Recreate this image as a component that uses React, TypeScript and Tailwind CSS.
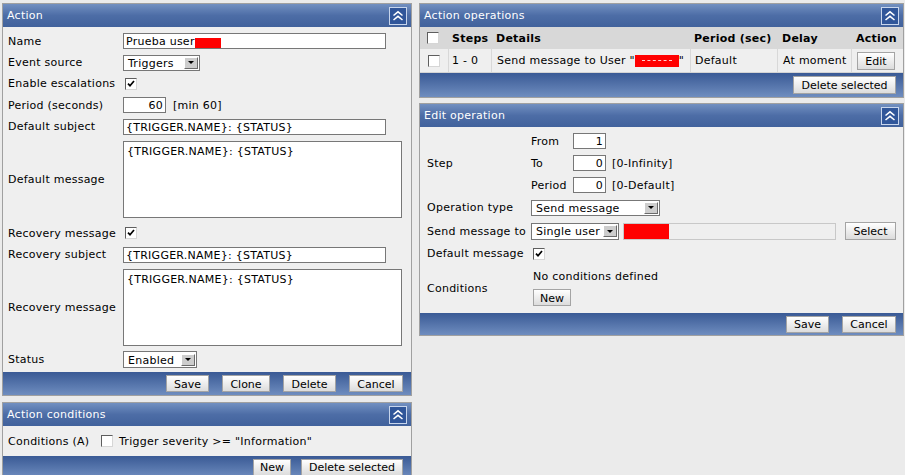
import React from 'react';

function CollapseIcon() {
  return (
    <svg width="18" height="18" viewBox="0 0 18 18" className="block shrink-0">
      <rect x="0.5" y="0.5" width="17" height="17" fill="#30569a" stroke="#c7d5ec" />
      <path d="M4.5 8.5 L9 4.8 L13.5 8.5 M4.5 13 L9 9.3 L13.5 13" fill="none" stroke="#ffffff" strokeWidth="1.5" />
    </svg>
  );
}

function PanelHeader({ title }: { title: string }) {
  return (
    <div className="h-[23px] flex items-center justify-between pl-[4px] pr-[4px] text-white bg-linear-to-b from-[#7290c1] via-[#4d6da6] to-[#41629c]">
      <span className="pt-[2px]">{title}</span>
      <CollapseIcon />
    </div>
  );
}

function PanelFooter({ children, className }: { children: React.ReactNode; className: string }) {
  return (
    <div className={`flex items-center justify-end bg-linear-to-b from-[#3a5a95] to-[#6f8dbf] ${className}`}>
      {children}
    </div>
  );
}

function Btn({ children, className }: { children: React.ReactNode; className: string }) {
  return (
    <button className={`flex items-center justify-center pt-[1px] border border-[#a4a4a4] bg-linear-to-b from-white to-[#dcdcdc] text-[11px] leading-none tracking-normal text-black ${className}`}>
      {children}
    </button>
  );
}

function Check({ checked }: { checked?: boolean }) {
  return (
    <span className="w-[12px] h-[12px] shrink-0 flex items-center justify-center bg-white border border-t-[#5e5e5e] border-l-[#5e5e5e] border-b-[#d6d6d6] border-r-[#d6d6d6]">
      {checked && (
        <svg width="8" height="8" viewBox="0 0 8 8">
          <path d="M1 3.6 L3 5.8 L7 1" stroke="#000" strokeWidth="1.7" fill="none" />
        </svg>
      )}
    </span>
  );
}

function Select({ value, className }: { value: string; className: string }) {
  return (
    <div className={`flex items-center bg-white border border-[#777] pl-[4px] ${className}`}>
      <span className="leading-none pt-[1px]">{value}</span>
      <span className="ml-auto mr-[1px] w-[14px] h-[12px] flex items-center justify-center bg-[#cdcdcd] border border-t-white border-l-white border-b-[#6a6a6a] border-r-[#6a6a6a]">
        <span className="w-0 h-0 border-x-[3px] border-x-transparent border-t-[3px] border-t-black" />
      </span>
    </div>
  );
}

function Field({ children, className }: { children?: React.ReactNode; className: string }) {
  return (
    <div className={`flex items-center bg-white border border-[#777] px-[2px] pt-[1px] leading-none ${className}`}>
      {children}
    </div>
  );
}

function Row({ label, h, children }: { label: string; h: string; children: React.ReactNode }) {
  return (
    <div className={`flex items-center ${h}`}>
      <div className="w-[115px] shrink-0 pt-[2px]">{label}</div>
      {children}
    </div>
  );
}

const MSG = '{TRIGGER.NAME}: {STATUS}';

function ActionPanel() {
  return (
    <div className="border border-[#a0a0a0]">
      <PanelHeader title="Action" />
      <div className="bg-[#efefef] pt-[3px] pb-[2px] pl-[5px]">
        <Row label="Name" h="h-[22px]">
          <Field className="w-[263px] h-[16px]">
            <span>Prueba user</span>
            <span className="inline-block w-[26px] h-[10px] mt-[3px] bg-[#ff0000]" />
          </Field>
        </Row>
        <Row label="Event source" h="h-[21px]">
          <Select value="Triggers" className="w-[77px] h-[16px]" />
        </Row>
        <Row label="Enable escalations" h="h-[21px]">
          <span className="ml-[2px]"><Check checked /></span>
        </Row>
        <Row label="Period (seconds)" h="h-[22px]">
          <Field className="w-[43px] h-[16px] justify-end">60</Field>
          <span className="ml-[7px] pt-[2px]">[min 60]</span>
        </Row>
        <Row label="Default subject" h="h-[21px]">
          <Field className="w-[263px] h-[16px]">{MSG}</Field>
        </Row>
        <Row label="Default message" h="h-[85px]">
          <textarea
            readOnly
            defaultValue={MSG}
            className="w-[279px] h-[77px] resize-none bg-white border border-[#777] px-[3px] pt-[3px] leading-[13px] outline-none"
          />
        </Row>
        <Row label="Recovery message" h="h-[22px]">
          <span className="ml-[2px]"><Check checked /></span>
        </Row>
        <Row label="Recovery subject" h="h-[21px]">
          <Field className="w-[263px] h-[16px]">{MSG}</Field>
        </Row>
        <Row label="Recovery message" h="h-[84px]">
          <textarea
            readOnly
            defaultValue={MSG}
            className="w-[279px] h-[77px] resize-none bg-white border border-[#777] px-[3px] pt-[3px] leading-[13px] outline-none"
          />
        </Row>
        <Row label="Status" h="h-[21px]">
          <Select value="Enabled" className="w-[74px] h-[17px]" />
        </Row>
      </div>
      <PanelFooter className="h-[23px] gap-[13px] pr-[8px]">
        <Btn className="w-[43px] h-[17px]">Save</Btn>
        <Btn className="w-[48px] h-[17px]">Clone</Btn>
        <Btn className="w-[53px] h-[17px]">Delete</Btn>
        <Btn className="w-[54px] h-[17px]">Cancel</Btn>
      </PanelFooter>
    </div>
  );
}

function ConditionsPanel() {
  return (
    <div className="border border-[#a0a0a0] mt-[6px]">
      <PanelHeader title="Action conditions" />
      <div className="bg-[#efefef] h-[30px] flex items-center pl-[5px]">
        <span className="w-[93px] shrink-0 pt-[2px]">Conditions (A)</span>
        <Check />
        <span className="ml-[6px] pt-[2px]">Trigger severity &gt;= &quot;Information&quot;</span>
      </div>
      <PanelFooter className="h-[22px] gap-[10px] pr-[8px]">
        <Btn className="w-[38px] h-[17px]">New</Btn>
        <Btn className="w-[102px] h-[17px]">Delete selected</Btn>
      </PanelFooter>
    </div>
  );
}

function OperationsPanel() {
  return (
    <div className="border border-[#a0a0a0]">
      <PanelHeader title="Action operations" />
      <div className="flex h-[22px] bg-[#d8d8d8] font-bold items-center">
        <div className="w-[29px] pl-[7px] flex items-center"><Check /></div>
        <div className="w-[43px] pl-[3px] pt-[2px]">Steps</div>
        <div className="w-[199px] pl-[4px] pt-[2px]">Details</div>
        <div className="w-[87px] pl-[3px] pt-[2px]">Period (sec)</div>
        <div className="w-[74px] pl-[4px] pt-[2px]">Delay</div>
        <div className="flex-1 pl-[4px] pt-[2px]">Action</div>
      </div>
      <div className="flex h-[24px] bg-[#efefef] border-b border-[#d4d4d4]">
        <div className="w-[29px] pl-[8px] flex items-center border-r border-[#d8d8d8]"><Check /></div>
        <div className="w-[43px] pl-[3px] pt-[2px] flex items-center border-r border-[#d8d8d8]">1 - 0</div>
        <div className="w-[199px] pl-[5px] flex items-center border-r border-[#d8d8d8]">
          <span className="pt-[2px]">Send message to User &quot;</span>
          <span className="w-[44px] h-[12px] bg-[#ff0000] flex items-center justify-center">
            <span className="w-[30px] border-t border-dashed border-[#ffd0d0]" />
          </span>
          <span className="pt-[2px]">&quot;</span>
        </div>
        <div className="w-[87px] pl-[4px] pt-[2px] flex items-center border-r border-[#d8d8d8]">Default</div>
        <div className="w-[74px] pl-[5px] pt-[2px] flex items-center border-r border-[#d8d8d8]">At moment</div>
        <div className="flex-1 pl-[5px] flex items-center">
          <Btn className="w-[38px] h-[18px]">Edit</Btn>
        </div>
      </div>
      <PanelFooter className="h-[24px] pr-[7px]">
        <Btn className="w-[103px] h-[18px]">Delete selected</Btn>
      </PanelFooter>
    </div>
  );
}

function StepLine({ label, value, hint }: { label: string; value: string; hint?: string }) {
  return (
    <div className="flex items-center h-[22px]">
      <span className="w-[42px] shrink-0 pt-[2px]">{label}</span>
      <Field className="w-[33px] h-[16px] justify-end">{value}</Field>
      {hint && <span className="ml-[6px] pt-[2px]">{hint}</span>}
    </div>
  );
}

function EditRow({ label, className, children }: { label: string; className: string; children: React.ReactNode }) {
  return (
    <div className={`flex items-center ${className}`}>
      <div className="w-[104px] shrink-0 pt-[2px]">{label}</div>
      {children}
    </div>
  );
}

function EditPanel() {
  return (
    <div className="border border-[#a0a0a0] mt-[5px]">
      <PanelHeader title="Edit operation" />
      <div className="bg-[#efefef] pl-[7px] pt-[3px]">
        <EditRow label="Step" className="h-[66px]">
          <div className="flex flex-col">
            <StepLine label="From" value="1" />
            <StepLine label="To" value="0" hint="[0-Infinity]" />
            <StepLine label="Period" value="0" hint="[0-Default]" />
          </div>
        </EditRow>
        <EditRow label="Operation type" className="h-[23px]">
          <Select value="Send message" className="w-[129px] h-[16px]" />
        </EditRow>
        <EditRow label="Send message to" className="h-[24px]">
          <Select value="Single user" className="w-[88px] h-[17px]" />
          <div className="ml-[4px] w-[213px] h-[17px] border border-[#c8c8c8] flex">
            <span className="w-[45px] h-full bg-[#ff0000]" />
          </div>
          <Btn className="ml-[9px] w-[51px] h-[18px]">Select</Btn>
        </EditRow>
        <EditRow label="Default message" className="h-[21px]">
          <span className="ml-[2px]"><Check checked /></span>
        </EditRow>
        <EditRow label="Conditions" className="h-[49px]">
          <div className="flex flex-col items-start pl-[2px] pt-[4px] pb-[7px]">
            <span className="h-[16px] flex items-center pt-[2px]">No conditions defined</span>
            <Btn className="mt-[5px] w-[38px] h-[17px]">New</Btn>
          </div>
        </EditRow>
      </div>
      <PanelFooter className="h-[22px] gap-[13px] pr-[7px]">
        <Btn className="w-[43px] h-[17px]">Save</Btn>
        <Btn className="w-[54px] h-[17px]">Cancel</Btn>
      </PanelFooter>
    </div>
  );
}

export default function App() {
  return (
    <div className="w-[905px] h-[475px] overflow-hidden bg-[#ebebeb] flex gap-[7px] pl-[2px] pt-[3px] font-['DejaVu_Sans',sans-serif] text-[11px] tracking-[0.25px] text-black">
      <div className="w-[410px] shrink-0">
        <ActionPanel />
        <ConditionsPanel />
      </div>
      <div className="w-[485px] shrink-0">
        <OperationsPanel />
        <EditPanel />
      </div>
    </div>
  );
}
